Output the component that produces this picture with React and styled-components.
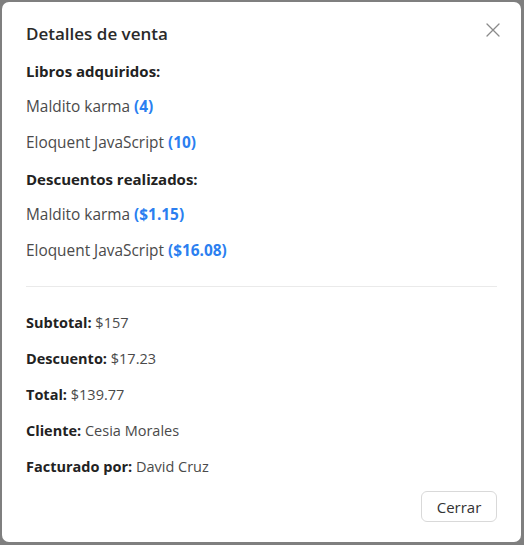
import React from 'react'
import styled, { createGlobalStyle } from 'styled-components'

const GlobalStyle = createGlobalStyle`
  html, body {
    margin: 0;
    padding: 0;
    background: #7f7f7f;
  }
  * {
    box-sizing: border-box;
  }
`

const books = [
  { title: 'Maldito karma', qty: '4', discount: '$1.15' },
  { title: 'Eloquent JavaScript', qty: '10', discount: '$16.08' }
]

const summary = [
  { label: 'Subtotal:', value: '$157' },
  { label: 'Descuento:', value: '$17.23' },
  { label: 'Total:', value: '$139.77' },
  { label: 'Cliente:', value: 'Cesia Morales' },
  { label: 'Facturado por:', value: 'David Cruz' }
]

const App = () => (
  <>
    <GlobalStyle />
    <StyledBackdrop>
      <StyledModal>
        <StyledHeader>
          <StyledTitle>Detalles de venta</StyledTitle>
          <StyledClose aria-label="Cerrar">
            <svg width="14" height="14" viewBox="0 0 14 14" fill="none">
              <path d="M1 1L13 13M13 1L1 13" stroke="#8a8a8a" strokeWidth="1.3" strokeLinecap="round" />
            </svg>
          </StyledClose>
        </StyledHeader>
        <StyledBody>
          <StyledSectionTitle>Libros adquiridos:</StyledSectionTitle>
          {books.map(book => (
            <StyledLine key={book.title}>
              {book.title} <StyledHighlight>({book.qty})</StyledHighlight>
            </StyledLine>
          ))}
          <StyledSectionTitle>Descuentos realizados:</StyledSectionTitle>
          {books.map(book => (
            <StyledLine key={book.title}>
              {book.title} <StyledHighlight>({book.discount})</StyledHighlight>
            </StyledLine>
          ))}
          <StyledDivider />
          {summary.map(item => (
            <StyledSummaryLine key={item.label}>
              <StyledLabel>{item.label}</StyledLabel> {item.value}
            </StyledSummaryLine>
          ))}
        </StyledBody>
        <StyledFooter>
          <StyledButton>Cerrar</StyledButton>
        </StyledFooter>
      </StyledModal>
    </StyledBackdrop>
  </>
)

export default App

const StyledBackdrop = styled.div`
  width: 524px;
  height: 545px;
  padding: 2px 3px 3px 2px;
  font-family: 'Open Sans', 'Liberation Sans', sans-serif;
`

const StyledModal = styled.div`
  background: #fff;
  border-radius: 7px;
  height: 100%;
  padding: 20px 24px 20px 24px;
  display: flex;
  flex-direction: column;
`

const StyledHeader = styled.div`
  display: flex;
  align-items: flex-start;
  justify-content: space-between;
`

const StyledTitle = styled.h1`
  margin: 0;
  padding-top: 1px;
  font-size: 17px;
  line-height: 22px;
  font-weight: 600;
  color: #2a2a2a;
`

const StyledClose = styled.button`
  border: 0;
  background: none;
  padding: 0;
  margin: 1px -3px 0 0;
  display: flex;
  cursor: pointer;
`

const StyledBody = styled.div`
  display: flex;
  flex-direction: column;
  gap: 16px;
  margin-top: 16px;
`

const StyledSectionTitle = styled.p`
  margin: 0;
  font-size: 15px;
  line-height: 20px;
  font-weight: 700;
  color: #222;
`

const StyledLine = styled.p`
  margin: 0;
  font-size: 15.4px;
  line-height: 20px;
  font-weight: 400;
  color: #4a4a4a;
`

const StyledSummaryLine = styled(StyledLine)`
  font-size: 14.5px;
`

const StyledHighlight = styled.span`
  font-weight: 700;
  color: #2b7ff0;
`

const StyledLabel = styled.span`
  font-weight: 700;
  color: #222;
`

const StyledDivider = styled.hr`
  margin: 9px 0 10px;
  border: 0;
  border-top: 1px solid #eaeaea;
`

const StyledFooter = styled.div`
  display: flex;
  justify-content: flex-end;
  margin-top: auto;
`

const StyledButton = styled.button`
  width: 76px;
  height: 31px;
  font-family: inherit;
  font-size: 15px;
  color: #333;
  background: #fff;
  border: 1px solid #d9d9d9;
  border-radius: 6px;
  cursor: pointer;
`
